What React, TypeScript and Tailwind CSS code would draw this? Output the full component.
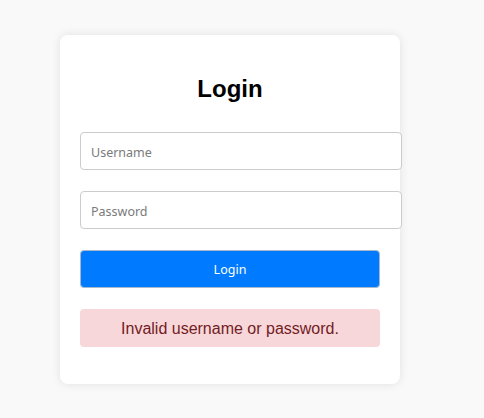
export default function App() {
  return (
    <div className="flex h-screen items-center bg-[#f9f9f9] pl-[60px] font-['Liberation_Sans',Arial,sans-serif]">
      <div className="w-[340px] rounded-lg bg-white px-[20px] pt-[20px] pb-[37px] shadow-[0_0_10px_rgba(0,0,0,0.1)]">
        <h2 className="mt-[20px] text-center text-[24px] font-bold leading-[28px] text-black">
          Login
        </h2>
        <form className="mt-[29px] flex flex-col gap-[21px]" onSubmit={(e) => e.preventDefault()}>
          <input
            type="text"
            placeholder="Username"
            className="box-border h-[38px] w-[322px] rounded border border-[#cccccc] bg-white px-[10px] pt-[3px] pb-0 font-['Noto_Sans',sans-serif] text-[12.5px] placeholder:text-[#7a7a7a] outline-none"
          />
          <input
            type="password"
            placeholder="Password"
            className="box-border h-[38px] w-[322px] rounded border border-[#cccccc] bg-white px-[10px] pt-[3px] pb-0 font-['Noto_Sans',sans-serif] text-[12.5px] placeholder:text-[#7a7a7a] outline-none"
          />
          <button
            type="submit"
            className="box-border h-[38px] w-[300px] rounded border border-[#a8b8cc] bg-[#007bff] pt-[3px] font-['Noto_Sans',sans-serif] text-[12.5px] text-white"
          >
            Login
          </button>
          <div className="box-border h-[38px] w-[300px] rounded bg-[#f8d7da] pt-[11px] pb-[9px] text-center text-[16px] leading-[18px] text-[#721c24]">
            Invalid username or password.
          </div>
        </form>
      </div>
    </div>
  );
}
